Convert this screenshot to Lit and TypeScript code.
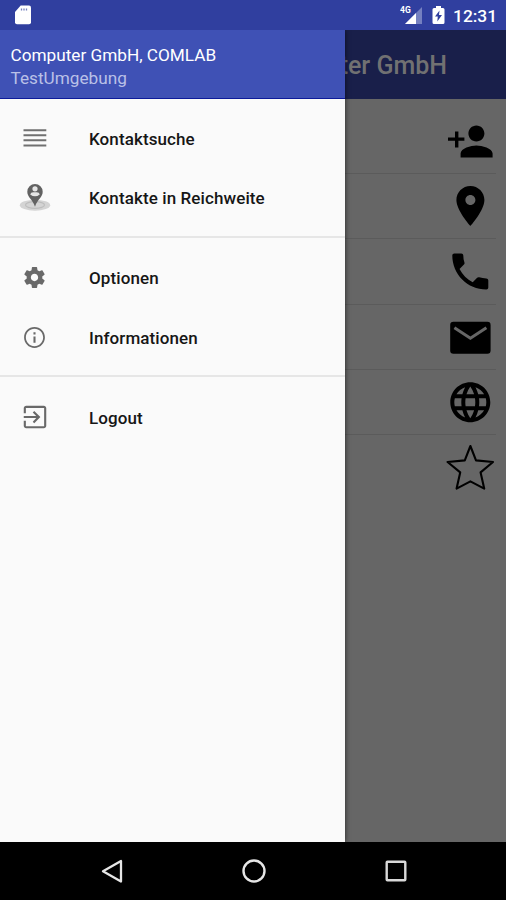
import { LitElement, html, svg, css } from "lit";
import { customElement } from "lit/decorators.js";

const actions = [
  svg`<path d="M15.200 12.300c2.210 0 4-1.790 4-4s-1.790-4-4-4-4 1.790-4 4 1.790 4 4 4zm-9-2V7.300H4.500v2.950H1v1.650h3.500v3.400h1.700v-3.400h3v-1.650H6.200zm9 4c-2.670 0-7.900 1.340-7.900 4v2h16v-2c0-2.660-5.430-4-8.100-4z"/>`,
  svg`<path d="M12.200 2C8.330 2 5.200 5.130 5.200 9c0 5.250 7 13 7 13s7-7.750 7-13c0-3.870-3.130-7-7-7zm0 9.500c-1.380 0-2.500-1.120-2.500-2.500s1.120-2.500 2.500-2.500 2.500 1.120 2.500 2.500-1.120 2.500-2.500 2.500z"/>`,
  svg`<path transform="translate(.15 .2)" d="M6.620 10.790c1.440 2.830 3.760 5.140 6.590 6.590l2.200-2.200c.27-.27.67-.36 1.020-.24 1.120.37 2.330.57 3.570.57.55 0 1 .45 1 1V20c0 .55-.45 1-1 1-9.390 0-17-7.610-17-17 0-.55.45-1 1-1h3.500c.55 0 1 .45 1 1 0 1.250.2 2.450.57 3.570.11.35.03.74-.25 1.020l-2.200 2.200z"/>`,
  svg`<rect x="2.100" y="4.400" width="20.200" height="16" rx="1.600"/><path d="M4.200 7.400 12.200 12.600 20.200 7.400" fill="none" stroke="#666" stroke-width="1.500"/>`,
  svg`<path transform="translate(.15 .15)" d="M11.990 2C6.470 2 2 6.480 2 12s4.470 10 9.990 10C17.520 22 22 17.520 22 12S17.520 2 11.990 2zm6.930 6h-2.950c-.32-1.250-.78-2.450-1.380-3.560 1.840.63 3.370 1.910 4.330 3.560zM12 4.040c.83 1.200 1.480 2.530 1.910 3.960h-3.820c.43-1.430 1.080-2.760 1.910-3.960zM4.260 14C4.100 13.360 4 12.690 4 12s.1-1.360.26-2h3.380c-.08.66-.14 1.320-.14 2 0 .68.06 1.340.14 2H4.260zm.82 2h2.950c.32 1.250.78 2.450 1.380 3.560-1.840-.63-3.370-1.900-4.330-3.560zm2.950-8H5.080c.96-1.660 2.490-2.930 4.330-3.560C8.810 5.550 8.350 6.750 8.030 8zM12 19.960c-.83-1.200-1.480-2.530-1.910-3.960h3.820c-.43 1.430-1.080 2.760-1.910 3.960zM14.340 14H9.660c-.09-.66-.16-1.320-.16-2 0-.68.07-1.350.16-2h4.680c.09.65.16 1.320.16 2 0 .68-.07 1.340-.16 2zm.25 5.560c.6-1.110 1.060-2.310 1.380-3.560h2.950c-.96 1.650-2.490 2.930-4.330 3.560zM16.360 14c.08-.66.14-1.320.14-2 0-.68-.06-1.340-.14-2h3.380c.16.64.26 1.310.26 2s-.1 1.360-.26 2h-3.380z"/>`,
  svg`<path d="M12.200 1 15 8.200 23.500 9 17.300 14.200 19.100 22.300 12.200 18.700 5.300 22.300 7.100 14.200.8 9 9.400 8.200Z" fill="none" stroke="#000" stroke-width="1.050" stroke-linejoin="round"/>`,
];

const icons = {
  list: html`<svg width="24" height="18" viewBox="0 0 24 18"><path d="M.5 1.200h22.800M.5 6.200h22.800M.5 11.300h22.800M.5 16.400h22.800" stroke="#707070" stroke-width="2"/></svg>`,
  nearby: html`<svg width="32" height="30" viewBox="0 0 32 30">
    <ellipse cx="16" cy="22.200" rx="15.200" ry="5.500" fill="#d4d4d4"/>
    <ellipse cx="16" cy="22" rx="9.500" ry="3.300" fill="none" stroke="#bdbdbd" stroke-width="1.200"/>
    <path d="M16 1a7.700 7.700 0 0 0-7.700 7.700c0 5.600 5.200 7.300 7.700 15 2.500-7.700 7.700-9.400 7.700-15A7.700 7.700 0 0 0 16 1z" fill="#626262"/>
    <circle cx="16" cy="5.800" r="2.600" fill="#e6e6e6"/><path d="M11.200 11.400q.5-2.200 3-2.200h3.600q2.500 0 3 2.200-4.800 3.800-9.600 0z" fill="#e6e6e6"/></svg>`,
  gear: html`<svg width="25" height="25" viewBox="0 0 24 24" fill="#696969"><path d="M19.430 12.980c.04-.32.07-.64.07-.98s-.03-.66-.07-.98l2.110-1.650c.19-.15.24-.42.12-.64l-2-3.460c-.12-.22-.39-.3-.61-.22l-2.490 1c-.52-.4-1.080-.73-1.690-.98l-.38-2.650C14.460 2.180 14.250 2 14 2h-4c-.25 0-.46.18-.49.42l-.38 2.650c-.61.25-1.170.59-1.690.98l-2.490-1c-.23-.09-.49 0-.61.22l-2 3.460c-.13.22-.07.49.12.64l2.110 1.650c-.04.32-.07.65-.07.98s.03.66.07.98l-2.110 1.650c-.19.15-.24.42-.12.64l2 3.460c.12.22.39.3.61.22l2.490-1c.52.4 1.080.73 1.690.98l.38 2.650c.03.24.24.42.49.42h4c.25 0 .46-.18.49-.42l.38-2.650c.61-.25 1.170-.59 1.690-.98l2.490 1c.23.09.49 0 .61-.22l2-3.460c.12-.22.07-.49-.12-.64l-2.110-1.650zM12 15.500c-1.930 0-3.500-1.570-3.500-3.500s1.570-3.500 3.500-3.500 3.500 1.570 3.500 3.500-1.570 3.500-3.500 3.500z"/></svg>`,
  info: html`<svg width="25" height="25" viewBox="0 0 24 24" fill="#696969"><path d="M11 17h2v-6h-2v6zm1-15C6.480 2 2 6.480 2 12s4.480 10 10 10 10-4.480 10-10S17.520 2 12 2zm0 18.300c-4.600 0-8.300-3.700-8.300-8.300s3.700-8.300 8.300-8.300 8.300 3.700 8.300 8.300-3.700 8.300-8.300 8.300zM11 9h2V7h-2v2z"/></svg>`,
  logout: html`<svg width="30" height="30" viewBox="0 0 24 24" fill="#696969"><path d="M10.200 15.700L11.400 16.900l4.900-4.900-4.900-4.900-1.200 1.200L13 11.150H3v1.700h10l-2.800 2.850zM19 3H5c-1.110 0-2 .9-2 2v4h1.700V4.700h14.600v14.600H4.700V15H3v4c0 1.100.89 2 2 2h14c1.100 0 2-.9 2-2V5c0-1.100-.9-2-2-2z"/></svg>`,
};

const groups = [
  [
    { icon: icons.list, label: "Kontaktsuche" },
    { icon: icons.nearby, label: "Kontakte in Reichweite" },
  ],
  [
    { icon: icons.gear, label: "Optionen" },
    { icon: icons.info, label: "Informationen" },
  ],
  [{ icon: icons.logout, label: "Logout" }],
];

@customElement("app-root")
export class AppRoot extends LitElement {
  static styles = css`
    :host { display: flex; flex-direction: column; width: 506px; height: 900px; overflow: hidden; background: #000; font-family: Roboto, "Liberation Sans", sans-serif; }
    svg { display: block; flex: none; }
    .status { height: 30px; flex: none; box-sizing: border-box; display: flex; align-items: center; background: #303f9f; color: #fff; padding: 0 9px 0 14px; }
    .sd { margin-right: auto; }
    .signal { margin-right: 9px; }
    .battery { margin-right: 8px; }
    .net { font: 700 8.500px Roboto, sans-serif; }
    .clock { font-size: 17.400px; font-weight: 500; line-height: 30px; width: 44px; white-space: nowrap; padding-top: 2px; }
    .main { position: relative; height: 812px; flex: none; background: #666; overflow: hidden; }
    .bar { height: 69px; box-sizing: border-box; background: #191f4a; color: #717172; text-align: right; padding-right: 59px; font-size: 25px; font-weight: 500; line-height: 71px; }
    .list { padding: 9.400px 10px 0 0; }
    .row { height: 65.400px; box-sizing: border-box; display: flex; align-items: center; justify-content: flex-end; padding-right: 2px; border-bottom: 1px solid #5b5b5b; }
    .row:last-child { border-bottom: 0; }
    .drawer { position: absolute; left: 0; top: 0; width: 345px; height: 811.500px; background: #fafafa; box-shadow: 0 0 5px rgba(0,0,0,.65); display: flex; flex-direction: column; }
    .head { height: 69px; box-sizing: border-box; flex: none; background: #3f51b5; border-bottom: 1.500px solid #0c1a9a; padding: 14px 0 0 10.500px; color: #fff; font-size: 17.200px; line-height: 23px; }
    .title { white-space: nowrap; }
    .sub { color: #bac0e7; }
    .group { padding: 9.800px 0 9px; border-bottom: 2px solid #e6e6e6; }
    .group + .group { padding: 10.200px 0 8.700px; }
    .group:last-child { border-bottom: 0; }
    .item { height: 59.200px; display: flex; align-items: center; }
    .ico { width: 69.400px; margin-right: 19.600px; display: flex; justify-content: center; }
    .label { font-size: 17px; font-weight: 500; letter-spacing: .1px; color: #161616; white-space: nowrap; line-height: 20px; padding-top: 1px; }
    .nav { flex: 1; display: flex; justify-content: center; align-items: center; gap: 112px; padding-left: 2px; }
  `;

  render() {
    return html`
      <div class="status">
        <svg class="sd" width="18" height="22" viewBox="0 0 18 22"><path d="M6.700 1.500H15q2 0 2 2v14.800q0 2-2 2H3q-2 0-2-2V8z" fill="#fff"/><path d="M7.500 4.600v2M10 4.600v2M12.500 4.600v2" stroke="#7580bd" stroke-width="1.300"/></svg>
        <svg class="signal" width="23" height="20" viewBox="0 0 23 20"><path d="M22 2v17H5z" fill="#7580c0"/><path d="M16 8v11H5z" fill="#fff"/><text class="net" x="0" y="8.300" fill="#fff">4G</text></svg>
        <svg class="battery" width="13" height="20" viewBox="0 0 13 20"><path d="M4 1h5v2h2q1.500 0 1.500 1.500v13Q12.500 19 11 19H2Q.5 19 .5 17.500v-13Q.5 3 2 3h2z" fill="#fff"/><path d="M7.500 5.500 3 11.500h2.800L5.300 16.500 10 10H7z" fill="#303f9f"/></svg>
        <div class="clock">12:31</div>
      </div>
      <div class="main">
        <div class="bar">Computer GmbH</div>
        <div class="list">${actions.map((a) => html`<div class="row"><svg width="48" height="48" viewBox="0 0 24 24">${a}</svg></div>`)}</div>
        <div class="drawer">
          <div class="head"><div class="title">Computer GmbH, COMLAB</div><div class="sub">TestUmgebung</div></div>
          ${groups.map((g) => html`<div class="group">${g.map((i) => html`<div class="item"><div class="ico">${i.icon}</div><div class="label">${i.label}</div></div>`)}</div>`)}
        </div>
      </div>
      <div class="nav">
        <svg width="30" height="30" viewBox="0 0 30 30" fill="none" stroke="#e6e6e6" stroke-width="2.300"><path d="M24 5v20.500L6 15.300z" stroke-linejoin="round"/></svg>
        <svg width="30" height="30" viewBox="0 0 30 30" fill="none" stroke="#e6e6e6" stroke-width="2.400"><circle cx="15" cy="15" r="10.500"/></svg>
        <svg width="30" height="30" viewBox="0 0 30 30" fill="none" stroke="#d9d9d9" stroke-width="2.400"><rect x="5.700" y="5.700" width="18.600" height="18.600" rx=".7"/></svg>
      </div>`;
  }
}
